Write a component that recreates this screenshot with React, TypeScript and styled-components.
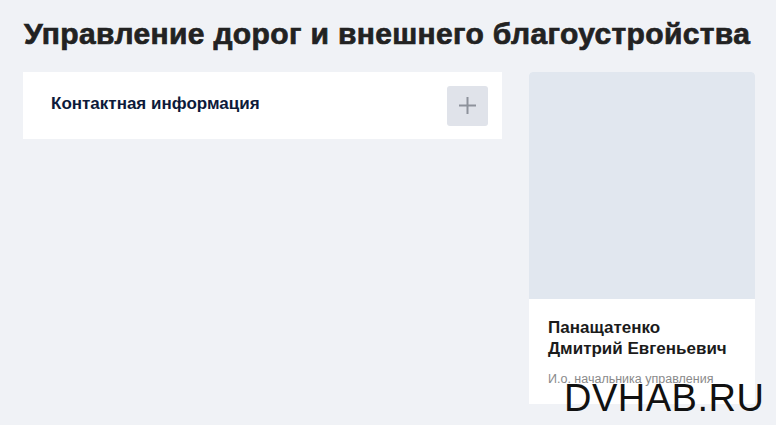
import React from 'react'
import styled, { createGlobalStyle } from 'styled-components'

const GlobalStyle = createGlobalStyle`
  html, body {
    margin: 0;
    padding: 0;
    background: #f0f2f6;
    font-family: "Liberation Sans", Arial, sans-serif;
  }
`

const Page = styled.div`
  width: 776px;
  height: 425px;
  overflow: hidden;
  position: relative;
  box-sizing: border-box;
  padding: 16px 21px 0 23px;
`

const Title = styled.h1`
  margin: 0 0 20px 1px;
  font-size: 30px;
  line-height: 36px;
  font-weight: 700;
  color: #222;
  -webkit-text-stroke: 0.7px #222;
  letter-spacing: 0.35px;
  white-space: nowrap;
`

const Columns = styled.div`
  display: grid;
  grid-template-columns: 479px 226px;
  column-gap: 27px;
  align-items: start;
`

const Accordion = styled.div`
  background: #fff;
  height: 67px;
  display: flex;
  align-items: center;
  justify-content: space-between;
  padding: 0 14px 0 28px;
`

const AccordionTitle = styled.span`
  font-size: 17px;
  font-weight: 700;
  color: #0d1a3a;
  margin-bottom: 4px;
`

const PlusButton = styled.button`
  width: 41px;
  height: 40px;
  border: 0;
  border-radius: 3px;
  background: #e0e3ea;
  display: flex;
  align-items: center;
  justify-content: center;
  padding: 0;
  cursor: pointer;
`

const PersonCard = styled.div`
  background: #fff;
  border-radius: 4px 4px 0 0;
  overflow: hidden;
  height: 332px;
`

const Photo = styled.div`
  height: 227px;
  background: #e1e7ef;
`

const PersonInfo = styled.div`
  padding: 18px 19px 0 19px;
`

const PersonName = styled.div`
  font-size: 17px;
  line-height: 21px;
  font-weight: 700;
  color: #1b1b1b;
`

const PersonRole = styled.div`
  margin-top: 12px;
  font-size: 12.5px;
  line-height: 16px;
  color: #8a8a8a;
`

const Watermark = styled.div`
  position: absolute;
  left: 564px;
  top: 375px;
  font-size: 38px;
  line-height: 46px;
  color: #111;
  letter-spacing: 0.5px;
`

function PlusIcon() {
  return (
    <svg width="19" height="19" viewBox="0 0 19 19">
      <path d="M9.5 1v17M1 9.5h17" stroke="#8d929b" strokeWidth="2" fill="none" />
    </svg>
  )
}

export default function App() {
  return (
    <>
      <GlobalStyle />
      <Page>
        <Title>Управление дорог и внешнего благоустройства</Title>
        <Columns>
          <Accordion>
            <AccordionTitle>Контактная информация</AccordionTitle>
            <PlusButton aria-label="Развернуть">
              <PlusIcon />
            </PlusButton>
          </Accordion>
          <PersonCard>
            <Photo />
            <PersonInfo>
              <PersonName>
                Панащатенко
                <br />
                Дмитрий Евгеньевич
              </PersonName>
              <PersonRole>И.о. начальника управления</PersonRole>
            </PersonInfo>
          </PersonCard>
        </Columns>
        <Watermark>DVHAB.RU</Watermark>
      </Page>
    </>
  )
}
